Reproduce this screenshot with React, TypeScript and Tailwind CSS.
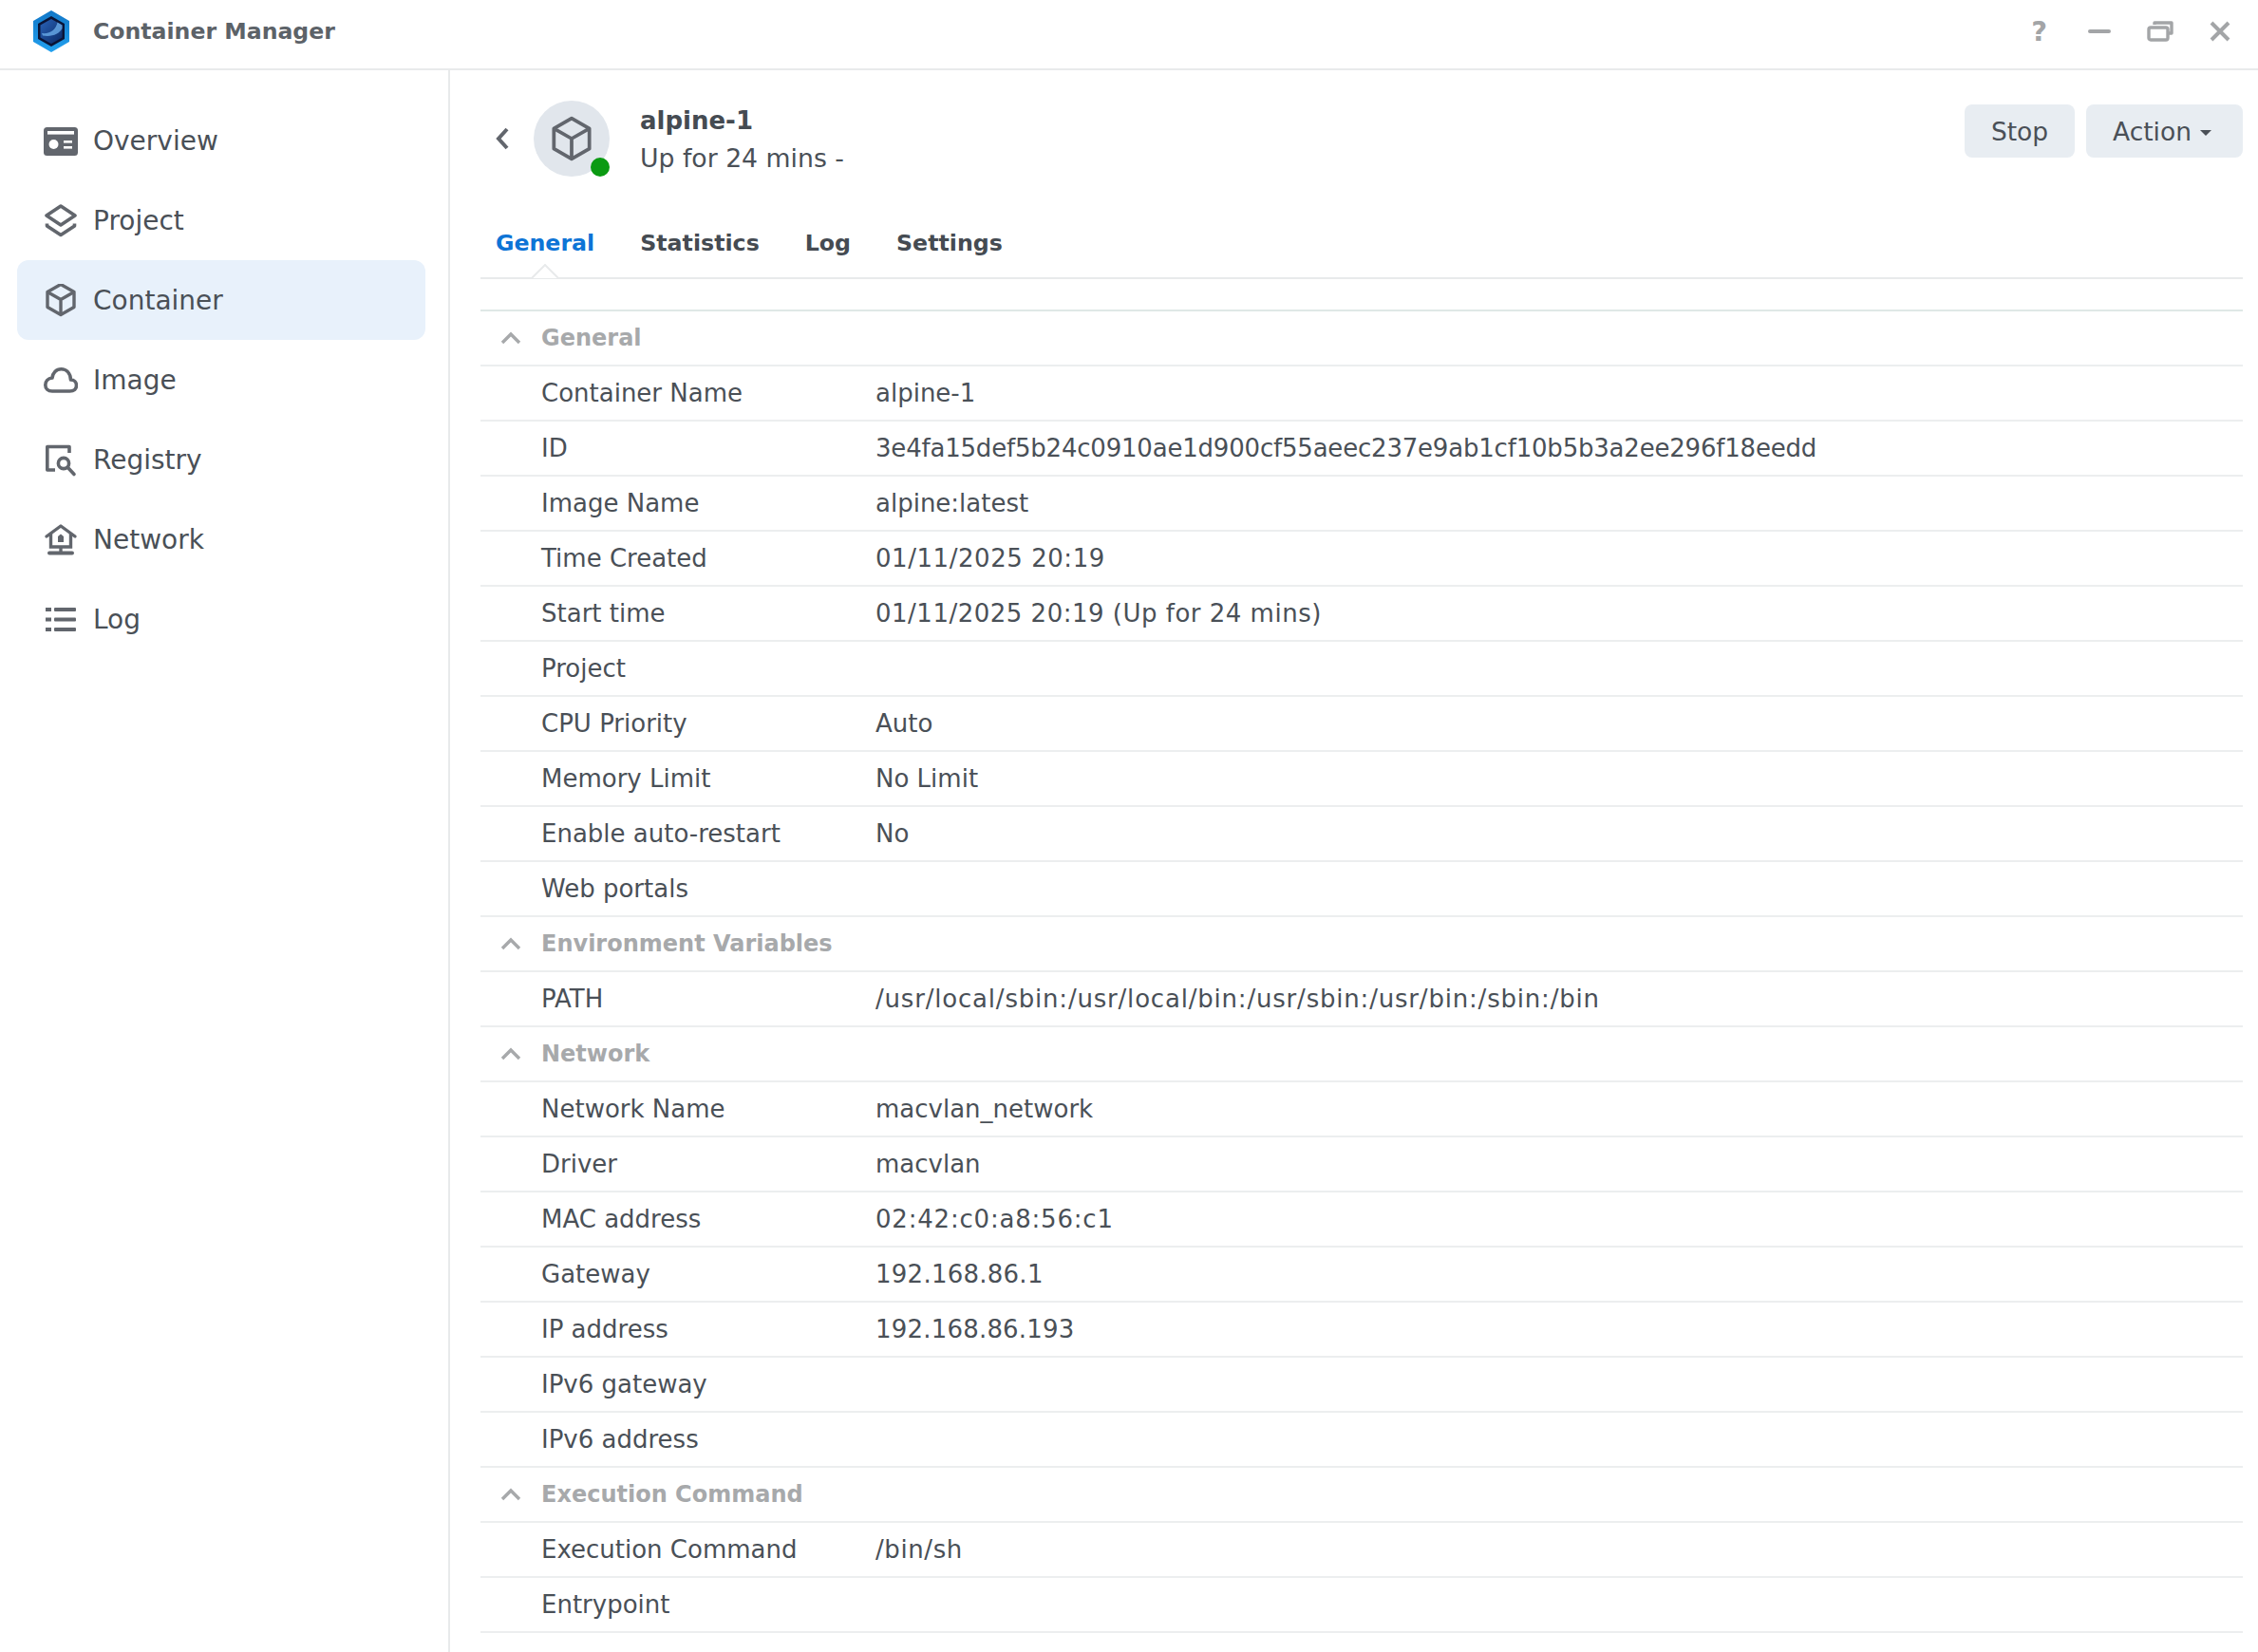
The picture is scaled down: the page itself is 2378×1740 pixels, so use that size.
import React from 'react';

type Row = [string, string, string?];

const sections: { title: string; rows: Row[] }[] = [
  {
    title: 'General',
    rows: [
      ['Container Name', 'alpine-1'],
      ['ID', '3e4fa15def5b24c0910ae1d900cf55aeec237e9ab1cf10b5b3a2ee296f18eedd', 'tracking-[-0.2px]'],
      ['Image Name', 'alpine:latest'],
      ['Time Created', '01/11/2025 20:19', 'tracking-[0.55px]'],
      ['Start time', '01/11/2025 20:19 (Up for 24 mins)', 'tracking-[0.5px]'],
      ['Project', ''],
      ['CPU Priority', 'Auto'],
      ['Memory Limit', 'No Limit'],
      ['Enable auto-restart', 'No'],
      ['Web portals', ''],
    ],
  },
  {
    title: 'Environment Variables',
    rows: [['PATH', '/usr/local/sbin:/usr/local/bin:/usr/sbin:/usr/bin:/sbin:/bin', 'tracking-[0.8px]']],
  },
  {
    title: 'Network',
    rows: [
      ['Network Name', 'macvlan_network'],
      ['Driver', 'macvlan'],
      ['MAC address', '02:42:c0:a8:56:c1', 'tracking-[0.8px]'],
      ['Gateway', '192.168.86.1', 'tracking-[0.25px]'],
      ['IP address', '192.168.86.193', 'tracking-[0.2px]'],
      ['IPv6 gateway', ''],
      ['IPv6 address', ''],
    ],
  },
  {
    title: 'Execution Command',
    rows: [
      ['Execution Command', '/bin/sh', 'tracking-[0.6px]'],
      ['Entrypoint', ''],
    ],
  },
];

const CubeIcon = ({ size = 36, color = '#62666d', sw = 3.4, box = '0 0 36 36' }: { size?: number; color?: string; sw?: number; box?: string }) => (
  <svg width={size} height={size} viewBox={box} fill="none" stroke={color} strokeWidth={sw} strokeLinejoin="round">
    <path d="M18 2 L32 10 V26 L18 34 L4 26 V10 Z" />
    <path d="M4 10 L18 18 L32 10 M18 18 V34" />
  </svg>
);

const navItems = [
  {
    label: 'Overview',
    icon: (
      <svg width="36" height="36" viewBox="0 0 36 36">
        <rect x="0" y="3" width="36" height="30" rx="3.5" fill="#62666d" />
        <rect x="4" y="7" width="28" height="3.6" fill="#fff" />
        <circle cx="10.5" cy="21" r="5" fill="#fff" />
        <rect x="21" y="17" width="9" height="2.6" fill="#fff" />
        <rect x="21" y="23" width="9" height="2.6" fill="#fff" />
      </svg>
    ),
  },
  {
    label: 'Project',
    icon: (
      <svg width="36" height="36" viewBox="0 0 36 36" fill="none" stroke="#62666d" strokeWidth="3.6" strokeLinejoin="round">
        <path d="M18 2 L33 12 L18 22 L3 12 Z" />
        <path d="M3.5 20.5 V23 L18 32.5 L32.5 23 V20.5" />
      </svg>
    ),
  },
  { label: 'Container', active: true, icon: <CubeIcon box="0 1.5 36 36" /> },
  {
    label: 'Image',
    icon: (
      <svg width="36" height="36" viewBox="0 0 36 36" fill="none" stroke="#62666d" strokeWidth="3.6" strokeLinejoin="round">
        <path d="M9 29 H27.5 C32 29 34.5 26.5 34.5 23 C34.5 19.5 32 17 28.5 17 C28 10 24 5.8 18.5 5.8 C13 5.8 9.5 10 9 15 C4.5 15.5 1.8 18.5 1.8 22.5 C1.8 26.5 4.5 29 9 29 Z" />
      </svg>
    ),
  },
  {
    label: 'Registry',
    icon: (
      <svg width="36" height="36" viewBox="0 0 36 36" fill="none" stroke="#62666d" strokeWidth="3.6">
        <path d="M27 10 V3.5 H3.8 V28 H12" strokeLinejoin="round" />
        <circle cx="21" cy="21" r="5.6" />
        <path d="M25.5 25.5 L32 32.5" strokeLinecap="round" />
      </svg>
    ),
  },
  {
    label: 'Network',
    icon: (
      <svg width="36" height="36" viewBox="0 0 36 36" fill="none" stroke="#62666d" strokeWidth="3.4">
        <path d="M3 14 L18 3 L33 14" strokeLinejoin="round" strokeLinecap="round" />
        <path d="M7.5 11 V25 H28.5 V11" />
        <path d="M18 25 V31" />
        <path d="M6 31.5 H30" strokeWidth="4" strokeLinecap="round" />
        <path d="M15 20 V14 L18 11.5 L21 14 V20 Z" fill="#62666d" stroke="none" />
      </svg>
    ),
  },
  {
    label: 'Log',
    icon: (
      <svg width="36" height="36" viewBox="0 0 36 36" fill="#62666d">
        <rect x="2" y="5" width="6" height="4" />
        <rect x="2" y="15.5" width="6" height="4" />
        <rect x="2" y="26" width="6" height="4" />
        <rect x="11" y="5" width="23" height="4" rx="1" />
        <rect x="11" y="15.5" width="23" height="4" rx="1" />
        <rect x="11" y="26" width="23" height="4" rx="1" />
      </svg>
    ),
  },
];

const Logo = () => (
  <svg width="44" height="46" viewBox="0 0 44 46">
    <defs>
      <linearGradient id="logoRim" x1="0" y1="0" x2="0" y2="1">
        <stop offset="0" stopColor="#1278c8" />
        <stop offset="1" stopColor="#22a0ee" />
      </linearGradient>
      <linearGradient id="logoCore" x1="0" y1="0" x2="1" y2="1">
        <stop offset="0" stopColor="#2a63b8" />
        <stop offset="1" stopColor="#0b2a66" />
      </linearGradient>
    </defs>
    <path d="M22 2 L40 12.5 V33.5 L22 44 L4 33.5 V12.5 Z" fill="url(#logoRim)" stroke="url(#logoRim)" strokeWidth="2" strokeLinejoin="round" />
    <path d="M22 7 L36 15 V31 L22 39 L8 31 V15 Z" fill="#0a1436" />
    <path d="M22 10 L33.5 16.5 V29.5 L22 36 L10.5 29.5 V16.5 Z" fill="url(#logoCore)" />
    <path d="M12 25 C21 26 27 21 28.5 13.5 L33.5 16.5 V20 C30 26 23 29 13 27.5 Z" fill="#6fb2ee" opacity="0.75" />
  </svg>
);

export default function App() {
  return (
    <div className="w-full h-[1740px] overflow-hidden bg-white font-['DejaVu_Sans',sans-serif] text-[#4a5057]">
      {/* Title bar */}
      <div className="flex items-center h-[74px] pb-[6px] border-b-2 border-[#e8eaeb]">
        <div className="ml-[32px] mr-[22px] flex">
          <Logo />
        </div>
        <span className="mt-[2px] text-[23.6px] font-bold text-[#5c6268]">Container Manager</span>
        <div className="ml-auto flex items-center gap-[38px] pr-[29px]">
          <span className="text-[29px] font-bold text-[#a3a5a7] leading-none">?</span>
          <div className="w-[24px] h-[4px] rounded-full bg-[#a3a5a7] ml-[5px]" />
          <svg width="28" height="22" viewBox="0 0 28 22" fill="none" stroke="#a3a5a7" strokeWidth="3.4">
            <path d="M8 4 V2 H26 V13 H22" strokeLinejoin="round" />
            <rect x="2" y="7" width="20" height="13" rx="2" />
          </svg>
          <svg width="22" height="22" viewBox="0 0 22 22" fill="none" stroke="#a3a5a7" strokeWidth="4">
            <path d="M2 2 L20 20 M20 2 L2 20" />
          </svg>
        </div>
      </div>

      <div className="flex h-[1666px]">
        {/* Sidebar */}
        <nav className="w-[474px] shrink-0 border-r-2 border-[#e8eaeb] pt-[32px] pl-[18px]">
          {navItems.map((item) => (
            <div
              key={item.label}
              className={`flex items-center gap-[16px] w-[430px] h-[84px] pl-[28px] pt-[2px] rounded-xl text-[28px] ${item.active ? 'bg-[#e8f1fb]' : ''}`}
            >
              {item.icon}
              <span>{item.label}</span>
            </div>
          ))}
        </nav>

        {/* Main */}
        <main className="flex-1 pl-[32px] pr-[16px]">
          <div className="flex items-start pt-[32px] pl-[16px] h-[114px]">
            <svg className="mt-[28px] mr-[26px]" width="14" height="24" viewBox="0 0 14 24" fill="none" stroke="#62666d" strokeWidth="4">
              <path d="M12 2 L3 12 L12 22" />
            </svg>
            <div className="relative flex items-center justify-center w-[80px] h-[80px] rounded-full bg-[#e1e6ec]">
              <CubeIcon size={48} color="#62666d" sw={2.8} />
              <div className="absolute right-0 bottom-0 w-[20px] h-[20px] rounded-full bg-[#0a9a12]" />
            </div>
            <div className="ml-[32px] mt-[1px]">
              <div className="text-[26px] font-bold leading-[40px] text-[#454b52]">alpine-1</div>
              <div className="text-[26.7px] leading-[40px]">Up for 24 mins -</div>
            </div>
            <div className="ml-auto flex gap-[12px] mt-[4px]">
              <button className="w-[116px] h-[56px] pt-[2px] rounded-lg bg-[#e8edf2] text-[26.5px] text-[#4a5057]">Stop</button>
              <button className="flex items-center gap-[9px] w-[165px] h-[56px] pl-[28px] pt-[2px] rounded-lg bg-[#e8edf2] text-[26.5px] text-[#4a5057]">
                Action
                <span className="mt-[2px] w-0 h-0 border-x-[6px] border-x-transparent border-t-[6px] border-t-[#4a5057]" />
              </button>
            </div>
          </div>

          {/* Tabs */}
          <div className="relative flex items-center gap-[48px] h-[106px] pl-[16px] pt-[33px] border-b-2 border-[#e8eaeb] text-[23.7px] font-bold text-[#454b52]">
            <span className="text-[#0d74d6]">General</span>
            <span>Statistics</span>
            <span>Log</span>
            <span>Settings</span>
            <svg className="absolute left-[53px] bottom-[-2px]" width="30" height="16" viewBox="0 0 30 16" fill="none">
              <path d="M0 15 H1 L15 1 L29 15 H30" fill="#fff" stroke="#e8eaeb" strokeWidth="2" />
            </svg>
          </div>

          {/* Detail table */}
          <div className="mt-[32px] border-t-2 border-[#dfe8e6]">
            {sections.map((section) => (
              <div key={section.title}>
                <div className="flex items-center h-[58px] border-b-2 border-[#eceeef]">
                  <svg className="ml-[21px] mr-[21px]" width="22" height="14" viewBox="0 0 22 14" fill="none" stroke="#a7a9ab" strokeWidth="3.4">
                    <path d="M2 12 L11 3 L20 12" />
                  </svg>
                  <span className="text-[24px] font-bold text-[#a7a9ab]">{section.title}</span>
                </div>
                {section.rows.map(([label, value, tracking]) => (
                  <div key={label} className="flex items-center h-[58px] border-b-2 border-[#eceeef] text-[26px]">
                    <span className="w-[416px] pl-[64px] shrink-0">{label}</span>
                    <span className={tracking}>{value}</span>
                  </div>
                ))}
              </div>
            ))}
          </div>
        </main>
      </div>
    </div>
  );
}
